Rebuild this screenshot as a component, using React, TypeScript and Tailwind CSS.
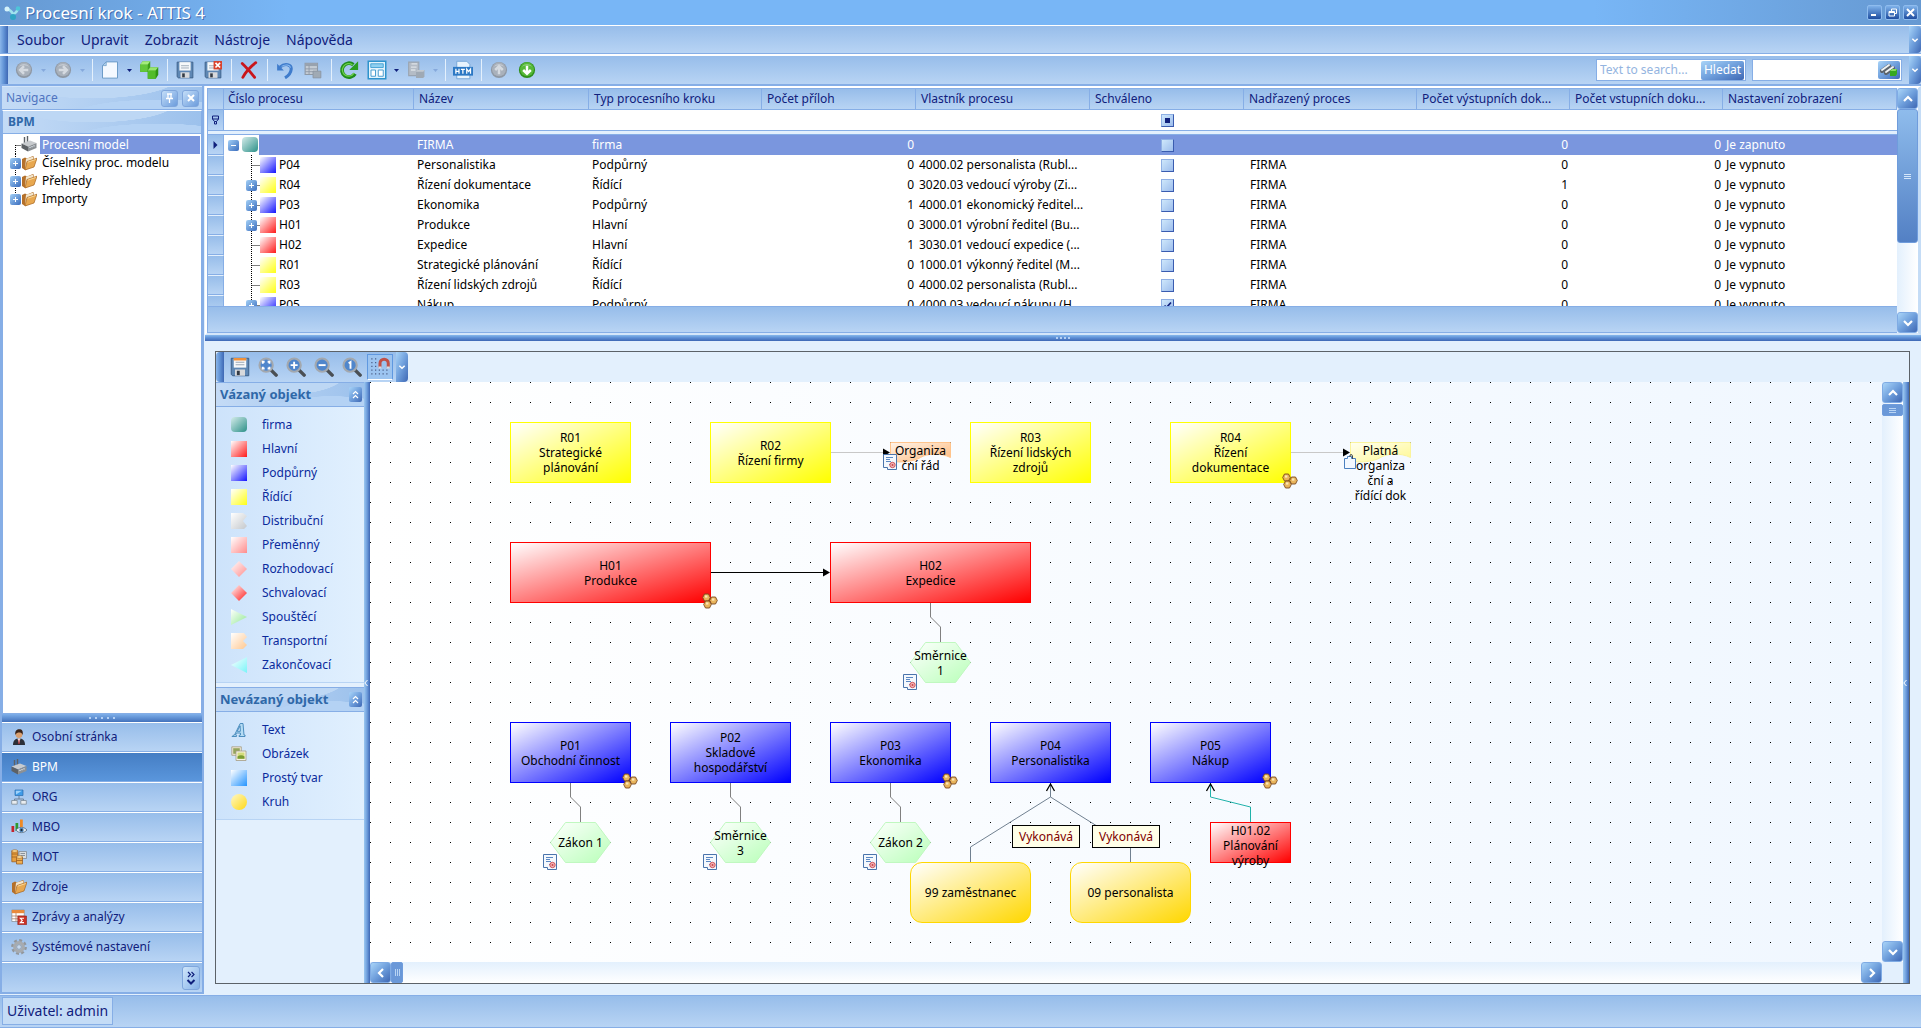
import React from 'react';

type Kids = { children?: React.ReactNode };

const BAR = 'bg-linear-to-b from-[#97bdea] to-[#b8d4f4]';
const BTN = 'bg-linear-to-br from-[#a9d4f8] via-[#6f9fdc] to-[#3f68b4]';
const GRIP = 'bg-linear-to-r from-[#8ab6ea] via-[#5f91d4] to-[#3f68b4]';
const WAVE =
  'bg-[radial-gradient(ellipse_70%_120%_at_78%_130%,#b4d2f4_60%,transparent_61%),radial-gradient(ellipse_60%_130%_at_45%_-40%,#bdd7f4_70%,transparent_71%),linear-gradient(to_right,#c4dbf6,#9cc1ec)]';

/* ---------- generic icons ---------- */

function Svg({ size = 18, children }: Kids & { size?: number }) {
  return (
    <svg width={size} height={size} viewBox="0 0 16 16" fill="none" aria-hidden="true">
      {children}
    </svg>
  );
}

function RoundArrow({ dir, on }: { dir: 'l' | 'r' | 'u' | 'd'; on?: boolean }) {
  const rot = { l: 0, u: 90, r: 180, d: 270 }[dir];
  return (
    <Svg>
      <circle cx="8" cy="8" r="7.2" fill={on ? '#2f8f1a' : '#8f98a4'} />
      <circle cx="8" cy="7.4" r="6.2" fill={on ? '#55b838' : '#a9b1bb'} />
      <path d="M3.4 5A6 6 0 0 1 12.6 5 8 6 0 0 0 3.4 5Z" fill="#fff" opacity=".45" />
      <path d="M11.8 8H5M8 4.6 4.6 8 8 11.4" stroke={on ? '#fff' : '#d5dae0'} strokeWidth="2.2" transform={`rotate(${rot} 8 8)`} />
    </Svg>
  );
}

const NewDoc = () => (
  <Svg size={20}>
    <path d="M5 1.500h9v13H2V4.500z" fill="#f4f9ff" stroke="#6d9cc8" strokeWidth=".8" />
    <path d="M5 1.500v3H2z" fill="#b8d6ee" stroke="#6d9cc8" strokeWidth=".6" />
  </Svg>
);

const Cubes = () => (
  <Svg size={20}>
    <path d="M1 3.500 3 1h6v6L7 9.500H1z" fill="#3da01c" />
    <path d="M1 3.500h6v6H1z" fill="#63c83a" />
    <path d="M1 3.500 3 1h6L7 3.500z" fill="#a4ec7c" />
    <path d="M7 8 9 5.800h6.400v6L13.400 15H7z" fill="#2f9414" />
    <path d="M7 8.300h6.300V15H7z" fill="#52bc2a" />
    <path d="m7 8.300 2-2.500h6.400l-2.100 2.500z" fill="#98e470" />
  </Svg>
);

function Floppy({ close, orange, size }: { close?: boolean; orange?: boolean; size?: number }) {
  return (
    <Svg size={size}>
      <path d="M1 1h14v14H2.200L1 14z" fill="#5e87b4" stroke="#3c5f88" strokeWidth=".8" />
      <path d="M3 1h10v7.500H3z" fill="#f6f8fa" />
      {orange && <path d="M3 .8h10v2H3z" fill="#f0913a" />}
      <path d="M4.500 4.200h7M4.500 6.200h7" stroke="#9aa7b4" strokeWidth=".8" />
      <path d="M4 10h8v5H4z" fill="#d7d9dc" />
      <path d="M5.500 11h2.300v3.500H5.500z" fill="#333a44" />
      {close && (
        <>
          <path d="M8.500 0H16v7.500H8.500z" fill="#d8432e" />
          <path d="m10.200 1.700 4.100 4.100m0-4.100-4.100 4.100" stroke="#fff" strokeWidth="1.500" />
        </>
      )}
    </Svg>
  );
}

const RedX = () => (
  <Svg>
    <path d="M2 2.200C5 5 9 9.500 13 14.500M14 1.500C9.500 5 5 10 2.500 14.500" stroke="#c9151b" strokeWidth="2.500" strokeLinecap="round" />
  </Svg>
);

const Undo = () => (
  <Svg>
    <path d="M1 2.500v6h6z" fill="#3f7ccc" />
    <path d="M3.500 5.500C8 1.500 14 3 13.500 7.500 13.200 11 10.500 13.500 8 15" stroke="#3f7ccc" strokeWidth="2.700" />
    <path d="M5 4.800C8.500 2.500 12.500 3.500 12.800 6" stroke="#8dbbf0" strokeWidth=".9" />
  </Svg>
);

const GrayTable = () => (
  <Svg>
    <path d="M1 2h11v10H1z" fill="#c5ccd4" stroke="#8e99a6" />
    <path d="M1 2h11v2.500H1z" fill="#98a2ae" />
    <path d="M1 7h11M1 9.500h11M4.500 4v8" stroke="#8e99a6" strokeWidth=".8" />
    <path d="M8 9h7v6H8z" fill="#a0aab4" stroke="#8893a0" strokeWidth=".7" />
  </Svg>
);

const GrayCopy = () => (
  <Svg>
    <path d="M1.500 1h9v12h-9z" fill="#b4bcc6" stroke="#9aa4b0" />
    <path d="M4 2.500h5M3.500 5.500h5M3.500 8h4" stroke="#dde2e8" strokeWidth="1.200" />
    <path d="m8 9.500 1-1.500h6.500v5.500l-1 1.500H8z" fill="#9fa9b4" />
    <path d="m8 9.500 1-1.500h6.500l-1 1.500z" fill="#c2c9d0" />
  </Svg>
);

const Refresh = () => (
  <Svg size={20}>
    <path d="M12.800 11A5.600 5.600 0 1 1 11.500 3.800" stroke="#1f8d1c" strokeWidth="3" />
    <path d="M12 10.500A5 5 0 1 1 10.800 4" stroke="#6fcf4c" strokeWidth="1" />
    <path d="M15.300 1v7H8.200z" fill="#2a9c22" />
  </Svg>
);

const WindowIcon = () => (
  <Svg size={20}>
    <path d="M1 1h14v14H1z" fill="#e2f3fc" stroke="#2f93cc" strokeWidth="1.200" />
    <path d="M3 3h10v3H3z" fill="#8fd0f0" stroke="#3f9fd4" strokeWidth=".7" />
    <path d="M3.200 8h3.600v5H3.200zM9 8h4v5H9z" fill="#fff" stroke="#4d9fd0" strokeWidth=".8" />
  </Svg>
);

const HtmlIcon = () => (
  <Svg size={20}>
    <path d="M3 1h8l2.500 2.500V15H3z" fill="#e8f3fd" stroke="#78a8d8" strokeWidth=".8" />
    <path d="M0 5.500h16v7H0z" fill="#2c78c4" />
    <path d="M2.300 7v4M4.800 7v4M2.300 9h2.500M6.300 7.400h3.200M7.900 7.400V11M11 11V7.200l1.500 2 1.500-2V11" stroke="#fff" strokeWidth="1" />
  </Svg>
);

const Factory = () => (
  <Svg size={16}>
    <path d="M3.500 1v7M6.500 0v7" stroke="#5c6166" strokeWidth="1.400" />
    <path d="M.5 7.500 9 4.500l6.500 2.500L7 10.500z" fill="#c8cbce" />
    <path d="M.5 7.500 7 10.500V15.500L.5 12z" fill="#5d6165" />
    <path d="m7 10.500 8.500-3.500V12L7 15.500z" fill="#8c9094" />
    <path d="M9 12v-1.200M11 11.200V10M13 10.400V9.200" stroke="#e8f0f8" strokeWidth="1.100" />
  </Svg>
);

const Folder = () => (
  <Svg size={16}>
    <path d="m1 4 3-1.500 2 1L12 1l1 1v9l-9 4L1 13z" fill="#b4702a" />
    <path d="m5 3.800 7.500-2.300V11L4 14z" fill="#f3e6cc" />
    <path d="m4 15 2-8.500L16 3.200 13 12z" fill="#e8a850" stroke="#a8641e" strokeWidth=".7" />
    <path d="m6.700 7.200 8-2.700" stroke="#fbdca0" strokeWidth=".9" />
  </Svg>
);

const Person = () => (
  <Svg size={16}>
    <path d="M2 16c0-5 2.500-6.500 6-6.500s6 1.500 6 6.500z" fill="#2c3038" />
    <path d="M6.500 9.500h3L8 15z" fill="#fff" />
    <path d="M7.600 10.500h.9L8.600 15H7.300z" fill="#b8242a" />
    <circle cx="8" cy="5.500" r="3.400" fill="#d9a070" />
    <path d="M4.400 6C3.600 1.600 6 .3 8.200.3c3 0 4.200 2 3.400 5.700C10.800 3.500 9 3.500 8 3.500S5 4 4.400 6Z" fill="#3a2418" />
  </Svg>
);

const OrgIcon = () => (
  <Svg size={16}>
    <path d="M8 7v3M3.500 12v-2h9v2" stroke="#6f8298" />
    <path d="M4 1h8v5.500H4z" fill="#3f9ce8" stroke="#2a6cae" strokeWidth=".7" />
    <path d="M4.800 1.800H11L5 5.500z" fill="#9fd2fa" />
    <path d="M.7 11.500h5.500v3.700H.7zM9.800 11.500h5.500v3.700H9.800z" fill="#e9edf0" stroke="#7d8a96" strokeWidth=".8" />
  </Svg>
);

const MboIcon = () => (
  <Svg size={16}>
    <path d="M.5 7h2.700v6H.5z" fill="#c4242c" />
    <path d="M4.500 4h2.700v8H4.500z" fill="#2f9a30" />
    <path d="M9 .5h2.800V8H9z" fill="#f08a24" />
    <path d="M5 11c2.500-3.500 8-3.500 11 0-3 3.500-8.500 3.500-11 0Z" fill="#e6edf4" stroke="#5f7488" strokeWidth=".9" />
    <circle cx="10.500" cy="11" r="2.200" fill="#4a80b4" />
    <circle cx="10.500" cy="11" r="1" fill="#14202c" />
  </Svg>
);

const MotIcon = () => (
  <Svg size={16}>
    <path d="M8 2.500h7.500v7H8z" fill="#d9dde0" stroke="#848c94" strokeWidth=".8" />
    <path d="M9.500 4.500h4.500M9.500 6.500h4.500" stroke="#8a9299" />
    <path d="M.8 1.800h6v11h-6z" fill="#e8a040" stroke="#94561a" strokeWidth=".7" />
    <ellipse cx="3.800" cy="2" rx="3" ry="1.300" fill="#fbd890" stroke="#94561a" strokeWidth=".5" />
    <path d="M.8 5h6M.8 8h6" stroke="#94561a" strokeWidth=".7" />
    <path d="M5.500 8h6v7h-6z" fill="#eeae50" stroke="#94561a" strokeWidth=".7" />
    <ellipse cx="8.500" cy="8" rx="3" ry="1.300" fill="#fde0a0" stroke="#94561a" strokeWidth=".5" />
    <path d="M5.500 11.500h6" stroke="#94561a" strokeWidth=".7" />
  </Svg>
);

const ReportIcon = () => (
  <Svg size={16}>
    <path d="M.8 1h12.500v11.500H.8z" fill="#fff" stroke="#8b939b" strokeWidth=".8" />
    <path d="M.8 1h12.500v3.200H.8z" fill="#e88a3c" />
    <path d="M.8 7h12.500M.8 9.800h12.500M5 4v8.500" stroke="#a87050" strokeWidth=".7" />
    <path d="M6.800 7h8.700v8.700H6.800z" fill="#cc3326" stroke="#8e1d14" strokeWidth=".6" />
    <path d="M13 9.200H9.300l2 2.200-2 2.200H13" stroke="#fff" strokeWidth="1.100" />
  </Svg>
);

const Gear = () => (
  <Svg size={16}>
    <circle cx="8" cy="8" r="6.600" stroke="#92979c" strokeWidth="2.600" strokeDasharray="2.900 2.280" />
    <circle cx="8" cy="8" r="4.300" stroke="#a7abaf" strokeWidth="3.200" />
    <circle cx="8" cy="8" r="2.300" fill="#c4d8ee" stroke="#84898e" strokeWidth=".6" />
  </Svg>
);

function Magnifier({ kind }: { kind: 'fit' | 'plus' | 'minus' | 'one' }) {
  const d = {
    fit: 'M3.800 5.300V3.800h1.500M7.700 3.800h1.500v1.500M9.200 7.700v1.500H7.700M5.300 9.200H3.800V7.700',
    plus: 'M6.500 3.700v5.600M3.700 6.500h5.600',
    minus: 'M3.700 6.500h5.600',
    one: 'M5.300 5 6.800 4v5.300',
  }[kind];
  return (
    <Svg size={20}>
      <path d="m10.500 10.500 4 4" stroke="#4a4f54" strokeWidth="2.800" strokeLinecap="round" />
      <circle cx="6.500" cy="6.500" r="5.300" fill="#4f86cc" stroke="#a3a8ae" strokeWidth="1.700" />
      <path d={d} stroke="#fff" strokeWidth="1.500" />
    </Svg>
  );
}

const MagnetGrid = () => (
  <Svg size={20}>
    {[1, 4, 7, 10, 13].map((y) =>
      [1, 4, 7, 10, 13].map((x) => (y < 8 && x > 5 ? null : <path key={`${x}-${y}`} d={`M${x} ${y}h1v1h-1z`} fill="#4c5f88" />)),
    )}
    <path d="M8 8.500V5a3.300 3.300 0 0 1 6.600 0v3.500" stroke="#c05048" strokeWidth="2.400" />
    <path d="M6.800 7.500h2.400v1.600H6.800zM13.400 7.500h2.400v1.600h-2.400z" fill="#d8dde2" />
  </Svg>
);

function Chevron({ dir, w = 12 }: { dir: 'u' | 'd' | 'l' | 'r'; w?: number }) {
  const rot = { u: 0, r: 90, d: 180, l: 270 }[dir];
  return (
    <svg width={w} height={w} viewBox="0 0 12 12" fill="none" aria-hidden="true">
      <path d="m2 8 4-4 4 4" stroke="#fff" strokeWidth="2.200" transform={`rotate(${rot} 6 6)`} />
    </svg>
  );
}

/* ---------- small controls ---------- */

function ToolBtn({ label, children, disabled }: Kids & { label: string; disabled?: boolean }) {
  return (
    <button type="button" aria-label={label} disabled={disabled} className="flex h-7 w-7 items-center justify-center">
      {children}
    </button>
  );
}

function Drop({ dim }: { dim?: boolean }) {
  return (
    <button type="button" aria-label="Další možnosti" className="flex h-7 w-[11px] items-center justify-center">
      <svg width="5" height="3" viewBox="0 0 5 3" aria-hidden="true">
        <path d="M0 0h5L2.500 3z" fill={dim ? '#86a9dc' : '#10207c'} />
      </svg>
    </button>
  );
}

const Sep = () => (
  <span className="flex w-2 justify-center">
    <span className="h-[22px] w-px border-r border-[#e4f0fc]" />
  </span>
);

function EndCap({ label }: { label: string }) {
  return (
    <button type="button" aria-label={label} className={`flex w-3 shrink-0 items-center justify-center rounded-r-sm ${BTN}`}>
      <Chevron dir="d" w={8} />
    </button>
  );
}

function Expander({ open, label }: { open?: boolean; label: string }) {
  return (
    <button
      type="button"
      aria-label={label}
      aria-expanded={!!open}
      className="flex size-[11px] items-center justify-center rounded-[2px] bg-linear-to-br from-[#a4d0f6] to-[#3a6cbc]"
    >
      <svg width="7" height="7" viewBox="0 0 7 7" aria-hidden="true">
        <path d={open ? 'M1 3.500h5' : 'M1 3.500h5M3.500 1v5'} stroke="#fff" strokeWidth="1" />
      </svg>
    </button>
  );
}

function ScrollBtn({ dir }: { dir: 'u' | 'd' | 'l' | 'r' }) {
  const label = { u: 'Nahoru', d: 'Dolů', l: 'Vlevo', r: 'Vpravo' }[dir];
  return (
    <button type="button" aria-label={label} className={`flex size-[21px] shrink-0 items-center justify-center rounded-[3px] border border-[#7fabe4] ${BTN}`}>
      <Chevron dir={dir} w={12} />
    </button>
  );
}

/* ---------- shape icons ---------- */

const SHAPES: Record<string, { d: string; to: string; from?: string }> = {
  firma: { d: 'M4 0h8q4 0 4 4v7q0 4-4 4H4q-4 0-4-4V4q0-4 4-4z', to: '#2c9088', from: '#d4ecea' },
  hlavni: { d: 'M0 0h16v16H0z', to: '#ff1a1a' },
  podpurny: { d: 'M0 0h16v16H0z', to: '#1414ff' },
  ridici: { d: 'M0 0h16v16H0z', to: '#ffff14' },
  distribucni: { d: 'M0 0h12l4 3-4 5 4 5-3 3H0z', to: '#c4c8cc' },
  premenny: { d: 'M0 0h16v16H0z', to: '#ff8c8c' },
  rozhodovaci: { d: 'm8 0 8 8-8 8-8-8z', to: '#ff8c8c' },
  schvalovaci: { d: 'm8 0 8 8-8 8-8-8z', to: '#ff1a1a' },
  spousteci: { d: 'm0 0 16 8-16 8z', to: '#90e890' },
  transportni: { d: 'M0 0h13l3 4-4 4 4 4-4 4H0z', to: '#ffc890' },
  zakoncovaci: { d: 'M16 0v16L0 8z', to: '#78f4f8' },
  tvar: { d: 'M0 0h16v16H0z', to: '#2494ff' },
  kruh: { d: 'M8 0a8 8 0 1 1 0 16A8 8 0 0 1 8 0z', to: '#ffd814', from: '#fff8c8' },
};

function Shape({ name }: { name: string }) {
  const s = SHAPES[name];
  const id = React.useId();
  return (
    <svg width="16" height="16" viewBox="0 0 16 16" aria-hidden="true" className="shrink-0">
      <linearGradient id={id} x1="0" y1="0" x2="1" y2="1">
        <stop offset="0" stopColor={s.from ?? '#fff'} />
        <stop offset="1" stopColor={s.to} />
      </linearGradient>
      <path d={s.d} fill={`url(#${id})`} />
    </svg>
  );
}

const LetterA = () => (
  <Svg size={16}>
    <path
      d="M1 14.500h4.500l.2-1.200-1.200-.3.900-2h4l.1 2-1.300.3-.2 1.200H14l.2-1.200-1.200-.3L12 1.500H9.200L3.500 13l-1.300.3zM6.200 9.300 9.100 3.800l.3 5.500z"
      fill="#b5dcf4"
      stroke="#3f84b8"
      strokeWidth=".9"
    />
  </Svg>
);

const Pictures = () => (
  <Svg size={16}>
    <path d="M.8.800h9.500v8.500H.8z" fill="#efe8d4" stroke="#a49c84" strokeWidth=".8" />
    <path d="M2.200 2.200h6.600v5.600H2.200z" fill="#94a45c" />
    <path d="M5 5h10v9.500H5z" fill="#f6f2e4" stroke="#a49c84" strokeWidth=".8" />
    <path d="M6.500 6.500h7v6.300h-7z" fill="#d4dc7c" />
    <path d="M6.500 10.500q3.500-2.500 7 0v2.300h-7z" fill="#7a9c34" />
  </Svg>
);

/* ---------- data ---------- */

type Row = { id: string; icon: string; name: string; type: string; att: number; owner: string; ok?: boolean; out: number; kids?: boolean };

const ROWS: Row[] = [
  { id: 'P04', icon: 'podpurny', name: 'Personalistika', type: 'Podpůrný', att: 0, owner: '4000.02 personalista (Rubl...', out: 0 },
  { id: 'R04', icon: 'ridici', name: 'Řízení dokumentace', type: 'Řídící', att: 0, owner: '3020.03 vedoucí výroby (Zi...', out: 1, kids: true },
  { id: 'P03', icon: 'podpurny', name: 'Ekonomika', type: 'Podpůrný', att: 1, owner: '4000.01 ekonomický ředitel...', out: 0, kids: true },
  { id: 'H01', icon: 'hlavni', name: 'Produkce', type: 'Hlavní', att: 0, owner: '3000.01 výrobní ředitel (Bu...', out: 0, kids: true },
  { id: 'H02', icon: 'hlavni', name: 'Expedice', type: 'Hlavní', att: 1, owner: '3030.01 vedoucí expedice (...', out: 0 },
  { id: 'R01', icon: 'ridici', name: 'Strategické plánování', type: 'Řídící', att: 0, owner: '1000.01 výkonný ředitel (M...', out: 0 },
  { id: 'R03', icon: 'ridici', name: 'Řízení lidských zdrojů', type: 'Řídící', att: 0, owner: '4000.02 personalista (Rubl...', out: 0 },
  { id: 'P05', icon: 'podpurny', name: 'Nákup', type: 'Podpůrný', att: 0, owner: '4000.03 vedoucí nákupu (H...', ok: true, out: 0, kids: true },
];

const HEADERS = [
  'Číslo procesu',
  'Název',
  'Typ procesního kroku',
  'Počet příloh',
  'Vlastník procesu',
  'Schváleno',
  'Nadřazený proces',
  'Počet výstupních dok...',
  'Počet vstupních doku...',
  'Nastavení zobrazení',
];

/* ---------- top bars ---------- */

function TitleBar() {
  const btn = `flex size-[15px] items-center justify-center rounded-[2px] border border-[#8fbcee] bg-linear-to-b from-[#7fb2ea] to-[#1f4da0]`;
  return (
    <header className="flex h-[25px] shrink-0 items-center bg-[linear-gradient(to_right,#6699d2,#78b6f6_15%,#78b6f6_83%,#6699d2)] pr-[3px] pl-1">
      <svg width="17" height="16" viewBox="0 0 17 16" aria-hidden="true">
        <path d="M3 4q4 1 6 5M14 3q-1 5-5 6M9 8v6" stroke="#9fe4ee" strokeWidth="2.500" fill="none" />
        <circle cx="3" cy="4" r="2.500" fill="#d4f2fa" />
        <circle cx="14" cy="3.500" r="2.300" fill="#4ec4d8" />
        <circle cx="9" cy="12" r="3" fill="#2fa4c4" />
      </svg>
      <h1 className="ml-1 text-[17px] leading-6 text-white [text-shadow:1px_1px_0_#3f6cb0]">Procesní krok - ATTIS 4</h1>
      <div className="ml-auto flex gap-[3px]">
        <button type="button" aria-label="Minimalizovat" className={btn}>
          <svg width="9" height="9" viewBox="0 0 9 9"><path d="M1 7h5" stroke="#fff" strokeWidth="2" /></svg>
        </button>
        <button type="button" aria-label="Obnovit" className={btn}>
          <svg width="9" height="9" viewBox="0 0 9 9" fill="none"><path d="M3.500 3V1h5v4.500h-2M1 3.500h5.500v4.500H1zM1 4.500h5" stroke="#fff" /></svg>
        </button>
        <button type="button" aria-label="Zavřít" className={btn}>
          <svg width="9" height="9" viewBox="0 0 9 9"><path d="m1 1 7 7m0-7L1 8" stroke="#fff" strokeWidth="2" /></svg>
        </button>
      </div>
    </header>
  );
}

function MenuBar() {
  return (
    <nav className={`flex h-[29px] shrink-0 border-y border-[#86aee6] border-t-white ${BAR}`}>
      <span className={`w-2 ${GRIP}`} />
      <div className="flex flex-1 items-center gap-4 pl-[9px] text-sm text-[#10207c]">
        {['Soubor', 'Upravit', 'Zobrazit', 'Nástroje', 'Nápověda'].map((m) => (
          <button key={m} type="button">{m}</button>
        ))}
      </div>
      <EndCap label="Možnosti nabídky" />
    </nav>
  );
}

function ToolBar() {
  return (
    <div className={`flex h-8 shrink-0 border-y-2 border-t-white border-b-[#86aee6] ${BAR}`}>
      <span className={`w-2 ${GRIP}`} />
      <div className="flex flex-1 items-center pl-0.5">
        <ToolBtn label="Zpět" disabled><RoundArrow dir="l" /></ToolBtn>
        <Drop dim />
        <ToolBtn label="Vpřed" disabled><RoundArrow dir="r" /></ToolBtn>
        <Drop dim />
        <Sep />
        <ToolBtn label="Nový"><NewDoc /></ToolBtn>
        <Drop />
        <ToolBtn label="Nový objekt"><Cubes /></ToolBtn>
        <Sep />
        <ToolBtn label="Uložit"><Floppy /></ToolBtn>
        <ToolBtn label="Uložit a zavřít"><Floppy close /></ToolBtn>
        <Sep />
        <ToolBtn label="Smazat"><RedX /></ToolBtn>
        <Sep />
        <ToolBtn label="Vrátit"><Undo /></ToolBtn>
        <ToolBtn label="Tabulka" disabled><GrayTable /></ToolBtn>
        <Sep />
        <ToolBtn label="Obnovit data"><Refresh /></ToolBtn>
        <ToolBtn label="Rozvržení"><WindowIcon /></ToolBtn>
        <Drop />
        <ToolBtn label="Kopírovat" disabled><GrayCopy /></ToolBtn>
        <Drop dim />
        <Sep />
        <ToolBtn label="Export HTML"><HtmlIcon /></ToolBtn>
        <Sep />
        <ToolBtn label="Předchozí" disabled><RoundArrow dir="u" /></ToolBtn>
        <ToolBtn label="Další"><RoundArrow dir="d" on /></ToolBtn>
      </div>
      <div className="flex items-center gap-1.5 pr-[7px]">
        <div className="flex h-[22px] w-[150px] items-center border border-[#86aee6] bg-white pr-px">
          <input aria-label="Hledaný text" placeholder="Text to search..." className="w-full min-w-0 pl-[3px] outline-none placeholder:text-[#94b4e0]" />
          <button type="button" className={`h-[19px] w-[43px] shrink-0 rounded-[2px] text-white ${BTN}`}>Hledat</button>
        </div>
        <div className="flex h-[22px] w-[150px] items-center border border-[#86aee6] bg-white pr-px">
          <input aria-label="Filtr" className="w-full min-w-0 pl-[3px] outline-none" />
          <button type="button" aria-label="Najít objekt" className={`flex h-[18px] w-[22px] shrink-0 items-center justify-center rounded-[2px] ${BTN}`}>
            <svg width="18" height="14" viewBox="0 0 18 14" aria-hidden="true">
              <path d="m2 8 7-5M6 10l7-5" stroke="#5c646c" strokeWidth="4" strokeLinecap="round" />
              <path d="m2 7 7-5M6 9l7-5" stroke="#eef2f4" strokeWidth="2" strokeLinecap="round" />
              <path d="m10 8 2-2h5v5l-1.500 2H10z" fill="#36a81e" />
              <path d="m10 8 2-2h5l-1.500 2z" fill="#86dc60" />
            </svg>
          </button>
        </div>
      </div>
      <EndCap label="Možnosti panelu" />
    </div>
  );
}

/* ---------- navigation ---------- */

function TreeLines({ up, down, h, w }: { up?: boolean; down?: boolean; h: number; w: number }) {
  const mid = h / 2;
  return (
    <svg width={w} height={h} className="[grid-area:1/1]" aria-hidden="true">
      <path
        d={`M5.500 ${up ? 0 : mid}V${down ? h : mid}M5.500 ${mid + 0.5}H${w}`}
        stroke="#000"
        strokeDasharray="1 1"
        fill="none"
      />
    </svg>
  );
}

function NavPanel() {
  const items: [string, boolean][] = [
    ['Číselníky proc. modelu', true],
    ['Přehledy', true],
    ['Importy', false],
  ];
  const modules: [string, React.ReactNode][] = [
    ['Osobní stránka', <Person />],
    ['BPM', <Factory />],
    ['ORG', <OrgIcon />],
    ['MBO', <MboIcon />],
    ['MOT', <MotIcon />],
    ['Zdroje', <Folder />],
    ['Zprávy a analýzy', <ReportIcon />],
    ['Systémové nastavení', <Gear />],
  ];
  const sq = 'flex h-[17px] w-[17px] items-center justify-center rounded-[3px] border border-[#7fa6dc] bg-linear-to-br from-[#c4def8] to-[#6c9cdc]';
  return (
    <aside className="flex w-[204px] shrink-0 flex-col border-x-2 border-b-2 border-[#86aee6] bg-[#d4e6fa] pt-px">
      <div className={`flex h-[23px] shrink-0 items-center border-b border-[#86aee6] pr-[3px] pl-1 ${WAVE}`}>
        <span className="text-[#4f74c0]">Navigace</span>
        <button type="button" aria-label="Připnout" className={`ml-auto ${sq}`}>
          <svg width="9" height="10" viewBox="0 0 9 10" fill="none"><path d="M2 1h5M3 1v4M6 1v4M1 5.500h7M4.500 6v4" stroke="#fff" strokeWidth="1.300" /></svg>
        </button>
        <button type="button" aria-label="Zavřít panel" className={`ml-1 ${sq}`}>
          <svg width="8" height="8" viewBox="0 0 8 8"><path d="m1 1 6 6m0-6L1 7" stroke="#fff" strokeWidth="2" /></svg>
        </button>
      </div>
      <h2 className={`flex h-6 shrink-0 items-center border border-[#86aee6] border-t-white pl-[5px] font-bold text-[#2f68a8] ${WAVE}`}>BPM</h2>
      <div className="flex-1 border border-t-0 border-[#86aee6] bg-white pt-0.5 pr-px pl-[7px] leading-[18px]">
        <div className="flex h-[18px]">
          <TreeLines w={11} h={18} down />
          <Factory />
          <button type="button" className="ml-[3px] flex-1 bg-[#7a96de] pl-0.5 text-left text-white">Procesní model</button>
        </div>
        {items.map(([t, down]) => (
          <div key={t} className="flex h-[18px] items-center">
            <span className="grid w-[11px] items-center">
              <TreeLines w={11} h={18} up down={down} />
              <span className="[grid-area:1/1]"><Expander label={`Rozbalit ${t}`} /></span>
            </span>
            <Folder />
            <button type="button" className="ml-[5px]">{t}</button>
          </div>
        ))}
      </div>
      <div className="flex h-2 shrink-0 items-center justify-center gap-1 bg-linear-to-b from-[#7fb0ea] to-[#4372bc]">
        {[0, 1, 2, 3, 4].map((i) => <span key={i} className="size-0.5 bg-[#b4d0f4]" />)}
      </div>
      {modules.map(([t, icon]) => (
        <button
          key={t}
          type="button"
          className={`flex h-[30px] shrink-0 items-center gap-[5px] border-y border-[#86aee6] border-t-white pl-[9px] ${
            t === 'BPM' ? 'bg-linear-to-b from-[#457ec4] to-[#5a96dc] text-white' : `text-[#10207c] ${BAR}`
          }`}
        >
          {icon}
          {t}
        </button>
      ))}
      <div className={`flex h-[30px] shrink-0 items-center justify-end border-t border-white pr-0.5 ${BAR}`}>
        <button type="button" aria-label="Další moduly" className="flex h-6 w-[18px] items-center justify-center rounded-[3px] border border-[#7fa6dc] bg-linear-to-br from-[#d0e6fa] to-[#86b2e8]">
          <svg width="10" height="14" viewBox="0 0 10 14" fill="none" aria-hidden="true">
            <path d="m2 1 2.500 2.500L2 6M5.500 1 8 3.500 5.500 6" stroke="#10207c" strokeWidth="1.200" />
            <path d="m1.500 9 3.500 3.500L8.500 9" stroke="#10207c" strokeWidth="2" />
          </svg>
        </button>
      </div>
    </aside>
  );
}

/* ---------- process table ---------- */

const checkbox =
  'block h-[13px] w-[13px] mx-auto appearance-none border border-[#8fb0e4] border-r-[#3a5cb0] border-b-[#3a5cb0] bg-linear-to-br from-[#cfe8fb] to-[#9cbcec]';

function ProcessGrid() {
  return (
    <section className="flex min-h-0 flex-[245] border-2 border-r-[3px] border-white border-r-[#c4dcf6] border-b-[#d4e6fa]">
      <div className="flex min-w-0 flex-1 flex-col border border-r-0 border-[#86aee6]">
        <div className="min-h-0 flex-1 overflow-hidden bg-white">
          <table className="w-full table-fixed border-separate border-spacing-0 whitespace-nowrap">
            <colgroup>
              <col className="w-4" />
              <col className="w-[190px]" />
              <col className="w-[175px]" />
              <col className="w-[173px]" />
              <col className="w-[154px]" />
              <col className="w-[174px]" />
              <col className="w-[154px]" />
              <col className="w-[173px]" />
              <col className="w-[153px]" />
              <col className="w-[153px]" />
              <col />
            </colgroup>
            <thead>
              <tr className="h-[21px]">
                <td className={`border-r border-b border-[#86aee6] p-0 ${BAR}`} />
                {HEADERS.map((h, i) => (
                  <th key={h} scope="col" className={`border-r border-b border-[#86aee6] p-0 text-left font-normal text-[#10207c] ${BAR} ${i === 0 ? 'pl-1' : 'pl-[5px]'}`}>
                    {h}
                  </th>
                ))}
              </tr>
              <tr className="h-[21px]">
                <td className={`border-r border-b border-[#86aee6] p-0 ${BAR}`}>
                  <svg width="9" height="10" viewBox="0 0 9 10" fill="none" className="mx-auto" aria-hidden="true">
                    <path d="M1.500 1h6v3l-2 2.500h-2L1.500 4zM1.500 4h6M3.500 6.500v2.500h2V6.500" stroke="#10207c" />
                  </svg>
                </td>
                {HEADERS.map((h, i) => (
                  <td key={h} className="border-b border-[#86aee6] p-0">
                    {i === 5 && (
                      <span className="grid place-items-center">
                        <input type="checkbox" aria-label="Filtr schváleno" className={`${checkbox} [grid-area:1/1]`} />
                        <span className="pointer-events-none size-[5px] bg-[#10207c] [grid-area:1/1]" />
                      </span>
                    )}
                  </td>
                ))}
              </tr>
              <tr className="h-1">
                <td colSpan={11} className="h-1 border-b border-[#86aee6] bg-[#e3f0fd] p-0" />
              </tr>
            </thead>
            <tbody>
              <tr className="h-5 text-white">
                <td className={`border-r border-b border-[#86aee6] p-0 ${BAR}`}>
                  <svg width="5" height="8" viewBox="0 0 5 8" className="mx-auto" aria-hidden="true">
                    <path d="M.5 0 4.500 4l-4 4z" fill="#10207c" />
                  </svg>
                </td>
                <td className="p-0">
                  <div className="flex h-5">
                    <span className="flex w-[35px] items-center gap-[3px] pl-1">
                      <Expander open label="Sbalit FIRMA" />
                      <Shape name="firma" />
                    </span>
                    <span className="flex-1 bg-[#7a96de]" />
                  </div>
                </td>
                <td className="bg-[#7a96de] p-0 pl-[3px]">FIRMA</td>
                <td className="bg-[#7a96de] p-0 pl-[3px]">firma</td>
                <td className="bg-[#7a96de] p-0 pr-0.5 text-right">0</td>
                <td className="bg-[#7a96de] p-0" />
                <td className="bg-[#7a96de] p-0"><input type="checkbox" aria-label="Schváleno FIRMA" className={checkbox} /></td>
                <td className="bg-[#7a96de] p-0" />
                <td className="bg-[#7a96de] p-0 pr-0.5 text-right">0</td>
                <td className="bg-[#7a96de] p-0 pr-0.5 text-right">0</td>
                <td className="bg-[#7a96de] p-0 pl-[3px]">Je zapnuto</td>
              </tr>
              {ROWS.map((r) => (
                <tr key={r.id} className="h-5">
                  <td className={`border-t border-r border-b border-[#86aee6] border-t-[#e4f0fc] p-0 ${BAR}`} />
                  <td className="p-0">
                    <div className="flex h-5 items-center pl-[22px]">
                      <span className="grid w-3.5 items-center">
                        <TreeLines w={14} h={20} up down />
                        {r.kids && <span className="[grid-area:1/1]"><Expander label={`Rozbalit ${r.id}`} /></span>}
                      </span>
                      <Shape name={r.icon} />
                      <span className="pl-[3px]">{r.id}</span>
                    </div>
                  </td>
                  <td className="p-0 pl-[3px]">{r.name}</td>
                  <td className="p-0 pl-[3px]">{r.type}</td>
                  <td className="p-0 pr-0.5 text-right">{r.att}</td>
                  <td className="p-0 pl-[3px]">{r.owner}</td>
                  <td className="p-0">
                    <span className="grid place-items-center">
                      <input type="checkbox" defaultChecked={r.ok} aria-label={`Schváleno ${r.id}`} className={`${checkbox} [grid-area:1/1]`} />
                      {r.ok && (
                        <svg width="9" height="9" viewBox="0 0 9 9" fill="none" className="pointer-events-none [grid-area:1/1]">
                          <path d="m1.500 4.500 2 2L8 1.500" stroke="#10207c" strokeWidth="1.700" />
                        </svg>
                      )}
                    </span>
                  </td>
                  <td className="p-0 pl-1.5">FIRMA</td>
                  <td className="p-0 pr-0.5 text-right">{r.out}</td>
                  <td className="p-0 pr-0.5 text-right">0</td>
                  <td className="p-0 pl-[3px]">Je vypnuto</td>
                </tr>
              ))}
            </tbody>
          </table>
        </div>
        <div className={`h-[26px] shrink-0 border-t border-[#86aee6] ${BAR}`} />
      </div>
      <div className="flex w-[21px] flex-col bg-linear-to-r from-[#e3f0fd] to-white">
        <ScrollBtn dir="u" />
        <span className={`flex h-[134px] flex-col items-center justify-center gap-px rounded-[3px] border border-[#6f9cdc] bg-linear-to-b from-[#8fbcec] to-[#5380c4]`}>
          {[0, 1, 2].map((i) => <span key={i} className="h-px w-[7px] bg-[#d4e6fa]" />)}
        </span>
        <span className="flex-1" />
        <ScrollBtn dir="d" />
      </div>
    </section>
  );
}

/* ---------- diagram ---------- */

const FILL = {
  yellow: 'border-[#ffff00] bg-linear-to-br/srgb from-white to-[#ffff00]',
  red: 'border-[#ff0000] bg-linear-to-br/srgb from-white to-[#ff0000]',
  blue: 'border-[#0000ff] bg-linear-to-br/srgb from-white to-[#0000ff]',
  gold: 'border-[#ffd700] bg-linear-to-br/srgb from-white to-[#ffd700] rounded-xl',
  note: 'border-black bg-[#ffffe8] text-[#800000]',
  plain: 'border-transparent',
};

type Node = { x: number; y: number; w: number; h: number; fill: keyof typeof FILL; lines: string[]; top?: boolean };

const NODES: Node[] = [
  { x: 140, y: 40, w: 121, h: 61, fill: 'yellow', lines: ['R01', 'Strategické', 'plánování'] },
  { x: 340, y: 40, w: 121, h: 61, fill: 'yellow', lines: ['R02', 'Řízení firmy'] },
  { x: 600, y: 40, w: 121, h: 61, fill: 'yellow', lines: ['R03', 'Řízení lidských', 'zdrojů'] },
  { x: 800, y: 40, w: 121, h: 61, fill: 'yellow', lines: ['R04', 'Řízení', 'dokumentace'] },
  { x: 140, y: 160, w: 201, h: 61, fill: 'red', lines: ['H01', 'Produkce'] },
  { x: 460, y: 160, w: 201, h: 61, fill: 'red', lines: ['H02', 'Expedice'] },
  { x: 140, y: 340, w: 121, h: 61, fill: 'blue', lines: ['P01', 'Obchodní činnost'] },
  { x: 300, y: 340, w: 121, h: 61, fill: 'blue', lines: ['P02', 'Skladové', 'hospodářství'] },
  { x: 460, y: 340, w: 121, h: 61, fill: 'blue', lines: ['P03', 'Ekonomika'] },
  { x: 620, y: 340, w: 121, h: 61, fill: 'blue', lines: ['P04', 'Personalistika'] },
  { x: 780, y: 340, w: 121, h: 61, fill: 'blue', lines: ['P05', 'Nákup'] },
  { x: 540, y: 480, w: 121, h: 61, fill: 'gold', lines: ['99 zaměstnanec'] },
  { x: 700, y: 480, w: 121, h: 61, fill: 'gold', lines: ['09 personalista'] },
  { x: 642, y: 443, w: 68, h: 23, fill: 'note', lines: ['Vykonává'] },
  { x: 722, y: 443, w: 68, h: 23, fill: 'note', lines: ['Vykonává'] },
  { x: 840, y: 440, w: 81, h: 41, fill: 'red', lines: ['H01.02', 'Plánování', 'výroby'], top: true },
  { x: 520, y: 60, w: 61, h: 31, fill: 'plain', lines: ['Organiza', 'ční řád'], top: true },
  { x: 980, y: 60, w: 61, h: 61, fill: 'plain', lines: ['Platná', 'organiza', 'ční a', 'řídící dok'], top: true },
  { x: 540, y: 260, w: 61, h: 41, fill: 'plain', lines: ['Směrnice', '1'] },
  { x: 180, y: 440, w: 61, h: 41, fill: 'plain', lines: ['Zákon 1'] },
  { x: 340, y: 440, w: 61, h: 41, fill: 'plain', lines: ['Směrnice', '3'] },
  { x: 500, y: 440, w: 61, h: 41, fill: 'plain', lines: ['Zákon 2'] },
];

const HEXES = [[540, 260], [180, 440], [340, 440], [500, 440]];
const DOCS = [[513, 72], [533, 292], [173, 472], [333, 472], [493, 472]];
const CELLS = [[332, 211], [912, 91], [252, 391], [572, 391], [892, 391]];

function Overlay() {
  return (
    <svg className="pointer-events-none absolute inset-0 h-full w-full" aria-hidden="true">
      {DOCS.map(([x, y]) => (
        <g key={`${x}${y}`} transform={`translate(${x} ${y})`}>
          <path d="M.5.5h13v15h-9v-2h-4z" fill="#f4f8fd" stroke="#4a74ac" />
          <path d="M3 3.500h7M3 5.500h4M3 7.500h5M6 10.500h3" stroke="#5a88c4" />
          <circle cx="9.500" cy="11" r="2.700" fill="#f4b4b4" stroke="#c84850" strokeWidth=".9" />
          <circle cx="9.500" cy="11" r="1" fill="#c84850" />
        </g>
      ))}
      <g transform="translate(974 72)">
        <path d="M.5 4.500h3v-2h4v2h4v10H.5z" fill="#f2f8ff" stroke="#4a80c0" />
        <path d="M6 3V1q2-1.500 2.500 1v3" stroke="#40484f" fill="none" />
      </g>
      {CELLS.map(([x, y]) => (
        <g key={`${x}${y}`} transform={`translate(${x} ${y})`} stroke="#7c4a20" strokeWidth=".9">
          {[[4.500, 4.500], [11.500, 7.500], [5.500, 11.500]].map(([cx, cy]) => (
            <g key={cx}>
              <path d={`M${cx - 3.800} ${cy}l1.800-3.500h4l1.800 3.500-1.800 3.500h-4z`} fill="#e8b45c" />
              <path d={`M${cx - 1.500} ${cy - 1}h2.400`} stroke="#fbe8b8" strokeWidth="2.200" />
            </g>
          ))}
        </g>
      ))}
    </svg>
  );
}

function Diagram() {
  return (
    <div className="relative min-w-0 flex-1 overflow-hidden bg-linear-to-r from-white to-[#f0f7ff]">
      <svg className="absolute inset-0 h-full w-full" fill="none" aria-hidden="true">
        <defs>
          <pattern id="dots" width="20" height="20" patternUnits="userSpaceOnUse">
            <rect width="1" height="1" fill="#000" />
          </pattern>
          <linearGradient id="hex" x1="0" y1="0" x2="1" y2="1"><stop stopColor="#fff" /><stop offset="1" stopColor="#b8ffb8" /></linearGradient>
          <linearGradient id="peach" x1="0" y1="0" x2="1" y2="1"><stop stopColor="#fff4ea" /><stop offset="1" stopColor="#ffb878" /></linearGradient>
          <linearGradient id="lemon" x1="0" y1="0" x2="1" y2="1"><stop stopColor="#fffff0" /><stop offset="1" stopColor="#fff890" /></linearGradient>
        </defs>
        <rect width="100%" height="100%" fill="url(#dots)" />
        <path d="M461 70.500h53M921 70.500h53" stroke="#c8c8c8" />
        <path d="M341 190.500h113" stroke="#000" />
        <path d="m513 66.500 7 4-7 4zM973 66.500l7 4-7 4zM453 186.500l7 4-7 4z" fill="#000" />
        <path d="M560.500 221v14l10 10v15M200.500 401v14l10 10v15M360.500 401v14l10 10v15M520.500 401v14l10 10v15" stroke="#808080" />
        <path d="M680.500 401v14l-80 50v15M680.500 415l80 50v15" stroke="#708090" />
        <path d="M840.500 401v14l40 10v15" stroke="#20b2aa" />
        <path d="m676.500 409 4-7 4 7M836.500 409l4-7 4 7" stroke="#000" strokeWidth="1.300" />
        {HEXES.map(([x, y]) => (
          <path key={`${x}${y}`} d={`M${x + 0.500} ${y + 20.500}l15-20h30l15 20-15 20h-30z`} fill="url(#hex)" stroke="#c0f8c0" />
        ))}
        <path d="M520.500 60.500h60v15c-10-5-24-4-30 0s-22 6-30 3z" fill="url(#peach)" stroke="#ffc48c" />
        <path d="M980.500 60.500h60v15c-10-5-24-4-30 0s-22 6-30 3z" fill="url(#lemon)" stroke="#fbf49c" />
      </svg>
      {NODES.map((n) => (
        <div
          key={`${n.x}-${n.y}`}
          className={`absolute flex justify-center border text-center leading-[15px] whitespace-nowrap ${n.top ? 'items-start' : 'items-center'} ${FILL[n.fill]}`}
          style={{ left: n.x, top: n.y, width: n.w, height: n.h }}
        >
          <div>{n.lines.map((l) => <div key={l}>{l}</div>)}</div>
        </div>
      ))}
      <Overlay />
    </div>
  );
}

function Palette({ title, items }: { title: string; items: [string, React.ReactNode][] }) {
  return (
    <section className="border-b border-[#b8d4f4]">
      <div className={`flex h-[25px] items-center justify-between border-y border-[#86aee6] pr-0.5 pl-1 ${WAVE}`}>
        <h3 className="text-[13px] font-bold text-[#2f68a8]">{title}</h3>
        <button type="button" aria-label={`Sbalit ${title}`} className={`flex h-[15px] w-[13px] items-center justify-center rounded-[2px] ${BTN}`}>
          <svg width="7" height="9" viewBox="0 0 7 9" fill="none"><path d="m1 4 2.500-2.500L6 4M1 8l2.500-2.500L6 8" stroke="#fff" strokeWidth="1.200" /></svg>
        </button>
      </div>
      <ul className="bg-linear-to-r from-[#cde3fb] to-[#e1f0fe] pt-1.5 pb-[5px] text-[#0a2a9c]">
        {items.map(([t, icon]) => (
          <li key={t}>
            <button type="button" className="flex h-6 w-full items-center gap-[15px] pl-[15px]">
              {icon}
              {t}
            </button>
          </li>
        ))}
      </ul>
    </section>
  );
}

function VSplit() {
  return (
    <div className="flex w-1.5 shrink-0 items-center bg-linear-to-r from-[#9cc8f0] via-[#6f9edc] to-[#3f68b4]">
      <svg width="4" height="6" viewBox="0 0 4 6" fill="none" aria-hidden="true"><path d="M3.500 0 .8 3l2.700 3" stroke="#fff" /></svg>
    </div>
  );
}

function Editor() {
  const bound: [string, string][] = [
    ['firma', 'firma'], ['Hlavní', 'hlavni'], ['Podpůrný', 'podpurny'], ['Řídící', 'ridici'], ['Distribuční', 'distribucni'],
    ['Přeměnný', 'premenny'], ['Rozhodovací', 'rozhodovaci'], ['Schvalovací', 'schvalovaci'], ['Spouštěcí', 'spousteci'],
    ['Transportní', 'transportni'], ['Zakončovací', 'zakoncovaci'],
  ];
  return (
    <section className="flex min-h-0 flex-[633] flex-col bg-[#e3f0fd] pt-2.5 pr-[11px] pb-[11px] pl-2.5">
      <div className="flex min-h-0 flex-1 flex-col border border-[#5c6268]">
        <div className="flex h-[30px] shrink-0">
          <span className={`w-2 rounded-l-sm ${GRIP}`} />
          <div className={`flex items-center pr-[3px] pl-0.5 ${BAR}`}>
            <ToolBtn label="Uložit diagram"><Floppy orange size={20} /></ToolBtn>
            <ToolBtn label="Přizpůsobit"><Magnifier kind="fit" /></ToolBtn>
            <ToolBtn label="Přiblížit"><Magnifier kind="plus" /></ToolBtn>
            <ToolBtn label="Oddálit"><Magnifier kind="minus" /></ToolBtn>
            <ToolBtn label="Skutečná velikost"><Magnifier kind="one" /></ToolBtn>
            <button type="button" aria-label="Přichytit k mřížce" aria-pressed="true" className="ml-px flex size-[26px] items-center justify-center border border-[#5f98e0] border-b-white bg-[#9cc4f0]">
              <MagnetGrid />
            </button>
          </div>
          <EndCap label="Možnosti editoru" />
        </div>
        <div className="flex min-h-0 flex-1">
          <div className="flex w-[148px] shrink-0 flex-col gap-1">
            <Palette title="Vázaný objekt" items={bound.map(([t, s]) => [t, <Shape name={s} />])} />
            <Palette
              title="Nevázaný objekt"
              items={[['Text', <LetterA />], ['Obrázek', <Pictures />], ['Prostý tvar', <Shape name="tvar" />], ['Kruh', <Shape name="kruh" />]]}
            />
          </div>
          <VSplit />
          <div className="flex min-w-0 flex-1 flex-col">
            <div className="flex min-h-0 flex-1">
              <Diagram />
              <div className="flex w-[21px] flex-col bg-linear-to-r from-[#e3f0fd] to-white">
                <ScrollBtn dir="u" />
                <span className="mt-px flex h-3 flex-col items-center justify-center gap-px rounded-[2px] border border-[#6f9cdc] bg-[#6a98d8]">
                  {[0, 1, 2].map((i) => <span key={i} className="h-px w-[7px] bg-[#b8d4f4]" />)}
                </span>
                <span className="flex-1" />
                <ScrollBtn dir="d" />
              </div>
            </div>
            <div className="flex h-[21px] shrink-0 bg-[#e3f0fd] pr-[21px]">
              <div className="flex flex-1 bg-linear-to-b from-[#e3f0fd] to-white">
                <ScrollBtn dir="l" />
                <span className="flex w-3 items-center justify-center gap-px rounded-[2px] border border-[#6f9cdc] bg-[#6a98d8]">
                  {[0, 1, 2].map((i) => <span key={i} className="h-[7px] w-px bg-[#b8d4f4]" />)}
                </span>
                <span className="flex-1" />
                <ScrollBtn dir="r" />
              </div>
            </div>
          </div>
          <VSplit />
        </div>
      </div>
    </section>
  );
}

export default function App() {
  return (
    <div className="flex h-screen flex-col overflow-hidden bg-[#e3f0fd] font-['Noto_Sans',sans-serif] text-xs text-black">
      <TitleBar />
      <MenuBar />
      <ToolBar />
      <main className="flex min-h-0 flex-1">
        <div className="flex shrink-0 pb-px"><NavPanel /></div>
        <div className="flex min-w-0 flex-1 flex-col pl-px">
          <ProcessGrid />
          <div className="flex h-1.5 shrink-0 items-center justify-center gap-0.5 bg-linear-to-b from-[#86b8ec] via-[#5a8cd4] to-[#3f68b4]">
            {[0, 1, 2, 3].map((i) => <span key={i} className="h-0.5 w-0.5 bg-[#b4d0f4]" />)}
          </div>
          <Editor />
        </div>
      </main>
      <footer className={`flex h-[33px] shrink-0 items-start border-y border-[#86aee6] px-0.5 pt-px ${BAR}`}>
        <span className="flex h-7 items-center border border-[#86aee6] bg-[#c4dcf6] px-1 text-sm text-[#10207c]">Uživatel: admin</span>
      </footer>
    </div>
  );
}
